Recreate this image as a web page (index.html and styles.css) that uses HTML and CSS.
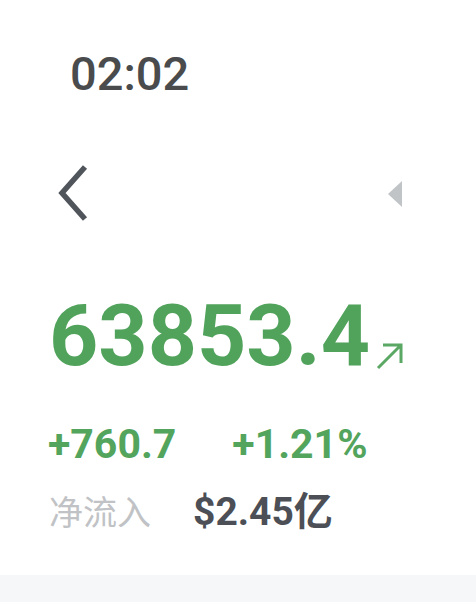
FILE: index.html
```html
<!DOCTYPE html>
<html lang="zh">
<head>
    <meta charset="UTF-8">
    <meta name="viewport" content="width=device-width, initial-scale=1.0">
    <title>行情</title>
    <link rel="stylesheet" href="styles.css">
</head>
<body>
    <div class="screen">
        <!-- 状态栏时间 -->
        <div class="clock">02:02</div>

        <!-- 导航 -->
        <div class="nav">
            <svg class="back" width="30" height="56" viewBox="0 0 30 56">
                <path d="M27 2 L4 28 L27 54" fill="none" stroke="#50555c" stroke-width="5.5"/>
            </svg>
            <svg class="caret" width="16" height="26" viewBox="0 0 16 26">
                <path d="M15 0 L15 26 L1 13 Z" fill="#c1c4c7"/>
            </svg>
        </div>

        <!-- 价格 -->
        <div class="quote">
            <span class="price">63853.4</span>
            <svg class="trend" width="30" height="30" viewBox="0 0 30 30">
                <path d="M3 27 L26 4 M8 4 L26 4 L26 22" fill="none" stroke="#5aa864" stroke-width="3"/>
            </svg>
        </div>

        <div class="change">
            <span>+760.7</span>
            <span>+1.21%</span>
        </div>

        <div class="flow">
            <span class="label">净流入</span>
            <span class="value">$2.45亿</span>
        </div>

        <div class="band"></div>
    </div>
</body>
</html>
```

FILE: styles.css
```css
body {
    margin: 0;
    background: #ffffff;
    font-family: Roboto, "Noto Sans CJK SC", sans-serif;
}

.screen {
    width: 476px;
    height: 605px;
    display: flex;
    flex-direction: column;
}

.clock {
    padding: 50px 0 0 70px;
    font-size: 47px;
    line-height: 48px;
    font-weight: 500;
    color: #4a4b4d;
}

.nav {
    display: flex;
    justify-content: space-between;
    align-items: center;
    padding: 67px 73px 0 58px;
}

.caret {
    margin-top: 2px;
}

.quote {
    display: flex;
    align-items: flex-end;
    gap: 5px;
    padding: 72px 0 0 49px;
}

.price {
    font-size: 86px;
    line-height: 86px;
    font-weight: 700;
    color: #51a35c;
}

.trend {
    margin-bottom: 8px;
}

.change {
    display: flex;
    gap: 56px;
    padding: 43px 0 0 48px;
    font-size: 41px;
    line-height: 44px;
    font-weight: 700;
    color: #53a45d;
}

.flow {
    display: flex;
    align-items: baseline;
    gap: 42px;
    padding: 21px 0 0 49px;
    line-height: 48px;
}

.label {
    font-family: "Noto Sans CJK SC", sans-serif;
    font-size: 34px;
    color: #c0c2c5;
}

.value {
    font-size: 39px;
    font-weight: 700;
    color: #4c4f56;
}

.band {
    margin-top: auto;
    margin-bottom: 3px;
    height: 27px;
    background: #f5f7f9;
}
```
